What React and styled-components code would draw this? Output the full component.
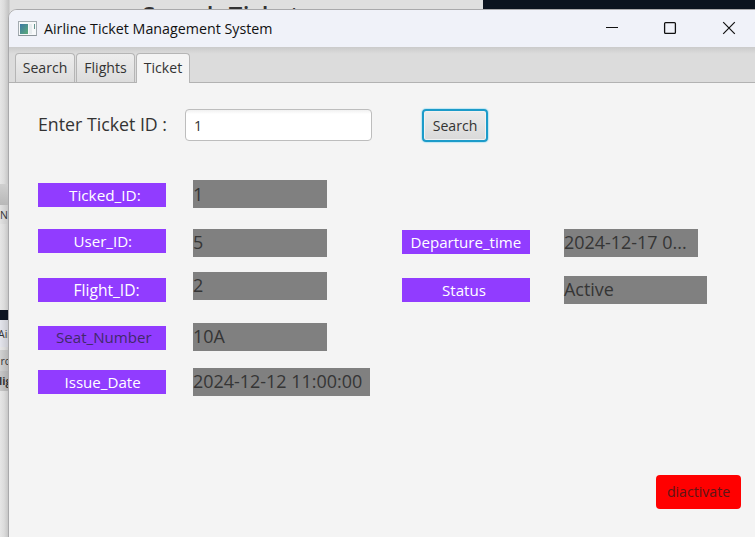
import React from 'react';
import styled, { createGlobalStyle } from 'styled-components';

const GlobalStyle = createGlobalStyle`
  * { box-sizing: border-box; }
  body { margin: 0; overflow: hidden; font-family: "Open Sans", "Noto Sans", sans-serif; color: #333; }
  button, input { font-family: inherit; }
`;

const Desktop = styled.div`
  position: relative;
  width: 755px;
  height: 537px;
  overflow: hidden;
  background: #0b131e;
`;

const BackWindow = styled.div`
  width: 483px;
  height: 537px;
  background: linear-gradient(90deg, #e6e6e6 0, #dcdcdc 4px, #c2c2c2 9px, #dfdfdf 10px);
`;

const BackHeading = styled.div`
  position: absolute;
  left: 142px;
  top: -1px;
  font-size: 24px;
  line-height: 32px;
  font-weight: 600;
  letter-spacing: 0.3px;
  white-space: nowrap;
`;

const BackStrip = styled.div`
  position: absolute;
  left: 0;
  top: ${(p) => p.$top}px;
  width: 9px;
  height: ${(p) => p.$height}px;
  display: flex;
  align-items: center;
  text-indent: ${(p) => p.$indent || 0}px;
  overflow: hidden;
  white-space: nowrap;
  background: ${(p) => p.$bg};
  font-size: 10.5px;
  font-weight: ${(p) => (p.$bold ? 700 : 400)};
`;

const Window = styled.main`
  position: absolute;
  left: 8px;
  top: 9px;
  width: 755px;
  height: 540px;
  display: flex;
  flex-direction: column;
  border: 1px solid #a9a9ab;
  border-radius: 9px 9px 0 0;
  overflow: hidden;
  background: #f4f4f4;
`;

const TitleBar = styled.header`
  display: flex;
  align-items: center;
  flex: none;
  height: 37px;
  padding: 0 26px 0 9px;
  background: #f0f2f9;
`;

const Title = styled.h1`
  flex: 1;
  margin: 0 0 0 7px;
  font-size: 14.25px;
  font-weight: 400;
  line-height: 20px;
  color: #111;
`;

const WindowControls = styled.div`
  display: flex;
  gap: 45px;
  margin-top: -1px;
`;

const TabBar = styled.nav`
  display: flex;
  align-items: flex-end;
  gap: 1px;
  flex: none;
  height: 36px;
  padding: 0 6px;
  border-bottom: 1px solid #b2b2b2;
  background: linear-gradient(#cbcbcb, #dcdcdc 7px);
`;

const Tab = styled.button`
  width: ${(p) => p.$width}px;
  height: ${(p) => (p.$active ? 30 : 29)}px;
  margin: 0 0 ${(p) => (p.$active ? -1 : 0)}px;
  padding: 0 0 1px;
  border: 1px solid #b5b5b5;
  border-bottom: 0;
  border-radius: 4px 4px 0 0;
  background: ${(p) => (p.$active ? '#f4f4f4' : 'linear-gradient(#ededed, #dcdcdc)')};
  font-size: 14.1px;
  line-height: 20px;
  color: #333;
`;

const Content = styled.section`
  flex: 1;
  display: flex;
  flex-direction: column;
  padding: 26px 21px 0 29px;
`;

const SearchForm = styled.div`
  display: flex;
  align-items: flex-start;
  height: 33px;
`;

const Prompt = styled.label`
  width: 147px;
  margin-top: 3px;
  font-size: 17.75px;
  line-height: 24px;
  white-space: nowrap;
`;

const TicketInput = styled.input`
  width: 187px;
  height: 32px;
  margin-right: 50px;
  padding: 1px 8px 0;
  border: 1px solid #bdbdbd;
  border-radius: 4px;
  background: linear-gradient(#f1f1f1, #fff 4px);
  outline: none;
  font-size: 14.2px;
  color: #333;
`;

const SearchButton = styled.button`
  width: 66px;
  height: 33px;
  padding: 0 0 1px;
  border: 2px solid #1c9bc9;
  border-radius: 4px;
  background: linear-gradient(#ececec, #d9d9d9);
  box-shadow: 0 0 1px 1px #bfe6f3, inset 0 0 0 1px #f1f1f1;
  font-size: 14.1px;
  color: #333;
`;

const Details = styled.div`
  display: flex;
  align-items: flex-start;
  padding-top: 38px;
`;

const Column = styled.div`
  display: flex;
  flex-direction: column;
  width: ${(p) => p.$width}px;
`;

const FieldName = styled.div`
  width: 128px;
  height: 24px;
  margin-top: ${(p) => p.$gap}px;
  padding-left: ${(p) => p.$inset}px;
  background: #913cff;
  font-size: ${(p) => p.$size || 15.1}px;
  line-height: ${(p) => (p.$dark ? 23 : 24)}px;
  white-space: nowrap;
  color: ${(p) => (p.$dark ? '#42296b' : '#fff')};
`;

const FieldValue = styled.div`
  width: ${(p) => p.$width || 134}px;
  height: 28px;
  margin-top: ${(p) => p.$gap}px;
  background: #808080;
  font-size: 17.95px;
  line-height: ${(p) => p.$leading || 26}px;
  white-space: nowrap;
  color: #353535;
`;

const DeactivateButton = styled.button`
  align-self: flex-end;
  width: 85px;
  height: 34px;
  margin-top: 79px;
  padding: 0 0 1px;
  border: 0;
  border-radius: 4px;
  background: #f00;
  font-size: 14.1px;
  color: #5c1616;
`;

const AppIcon = () => (
  <svg width="19" height="16" viewBox="0 0 19 16">
    <defs>
      <linearGradient id="screen" x1="0" y1="0" x2="1" y2="1">
        <stop offset="0" stopColor="#3b78a6" />
        <stop offset="1" stopColor="#5cab77" />
      </linearGradient>
    </defs>
    <rect x="0.5" y="0.5" width="18" height="14" fill="#f7f9fa" stroke="#a3abb0" />
    <path d="M.5 14.5H18.5" stroke="#8b9499" />
    <rect x="2" y="3" width="8" height="10" fill="url(#screen)" />
    <rect x="11" y="3" width="3" height="10" fill="#e7ecee" />
    <path d="M16.5 3v5" stroke="#64958f" />
  </svg>
);

const MinimizeIcon = () => (
  <svg width="14" height="14" viewBox="0 0 14 14"><path d="M2 6.5H14" stroke="#111" /></svg>
);
const MaximizeIcon = () => (
  <svg width="14" height="14" viewBox="0 0 14 14">
    <rect x="1.6" y="1.6" width="10.8" height="10.8" rx="1" fill="none" stroke="#111" strokeWidth="1.3" />
  </svg>
);
const CloseIcon = () => (
  <svg width="14" height="14" viewBox="0 0 14 14">
    <path d="M1.2 1.2L12.8 12.8M12.8 1.2L1.2 12.8" stroke="#111" strokeWidth="1.2" />
  </svg>
);

const leftNames = [
  { text: 'Ticked_ID:', gap: 3, inset: 31, size: 15.3 },
  { text: 'User_ID:', gap: 22, inset: 35.5 },
  { text: 'Flight_ID:', gap: 25, inset: 35.5, size: 15.6 },
  { text: 'Seat_Number', gap: 24, inset: 18, dark: true },
  { text: 'Issue_Date', gap: 20, inset: 26.5 },
];
const leftValues = [
  { text: '1', gap: 0, leading: 28 },
  { text: '5', gap: 21 },
  { text: '2', gap: 15 },
  { text: '10A', gap: 23 },
  { text: '2024-12-12 11:00:00', gap: 17, width: 177 },
];
const rightNames = [
  { text: 'Departure_time', gap: 50, inset: 9 },
  { text: 'Status', gap: 24, inset: 40.5 },
];
const rightValues = [
  { text: '2024-12-17 0...', gap: 49 },
  { text: 'Active', gap: 19, width: 143 },
];

const Names = ({ items, width }) => (
  <Column $width={width}>
    {items.map((f) => (
      <FieldName key={f.text} $gap={f.gap} $inset={f.inset} $size={f.size} $dark={f.dark}>{f.text}</FieldName>
    ))}
  </Column>
);
const Values = ({ items, width }) => (
  <Column $width={width}>
    {items.map((f) => (
      <FieldValue key={f.text} $gap={f.gap} $width={f.width} $leading={f.leading}>{f.text}</FieldValue>
    ))}
  </Column>
);

export default function App() {
  return (
    <Desktop>
      <GlobalStyle />
      <BackWindow>
        <BackHeading>Search Ticket</BackHeading>
        <BackStrip $top={184} $height={21} $bg="linear-gradient(#cfcfcf, #b8b8b8)" />
        <BackStrip $top={205} $height={19} $bg="linear-gradient(90deg, #e2e2e2, #c4c4c4)">No</BackStrip>
        <BackStrip $top={310} $height={10} $bg="#0d1421" />
        <BackStrip $top={320} $height={27} $bg="linear-gradient(90deg, #e4e5ec, #c6c7cd)" $indent={-2}>Air</BackStrip>
        <BackStrip $top={350} $height={21} $bg="linear-gradient(90deg, #d2d2d2, #b4b4b4)" $indent={0.5}>rch</BackStrip>
        <BackStrip $top={371} $height={20} $bg="linear-gradient(90deg, #c8c8c8, #ababab)" $bold $indent={-1}>lig</BackStrip>
      </BackWindow>
      <Window>
        <TitleBar>
          <AppIcon />
          <Title>Airline Ticket Management System</Title>
          <WindowControls>
            <MinimizeIcon />
            <MaximizeIcon />
            <CloseIcon />
          </WindowControls>
        </TitleBar>
        <TabBar>
          <Tab $width={60}>Search</Tab>
          <Tab $width={59}>Flights</Tab>
          <Tab $width={54} $active>Ticket</Tab>
        </TabBar>
        <Content>
          <SearchForm>
            <Prompt htmlFor="ticket-id">Enter Ticket ID :</Prompt>
            <TicketInput id="ticket-id" defaultValue="1" />
            <SearchButton>Search</SearchButton>
          </SearchForm>
          <Details>
            <Names items={leftNames} width={155} />
            <Values items={leftValues} width={208.5} />
            <Names items={rightNames} width={162.5} />
            <Values items={rightValues} width={143} />
          </Details>
          <DeactivateButton>diactivate</DeactivateButton>
        </Content>
      </Window>
    </Desktop>
  );
}
